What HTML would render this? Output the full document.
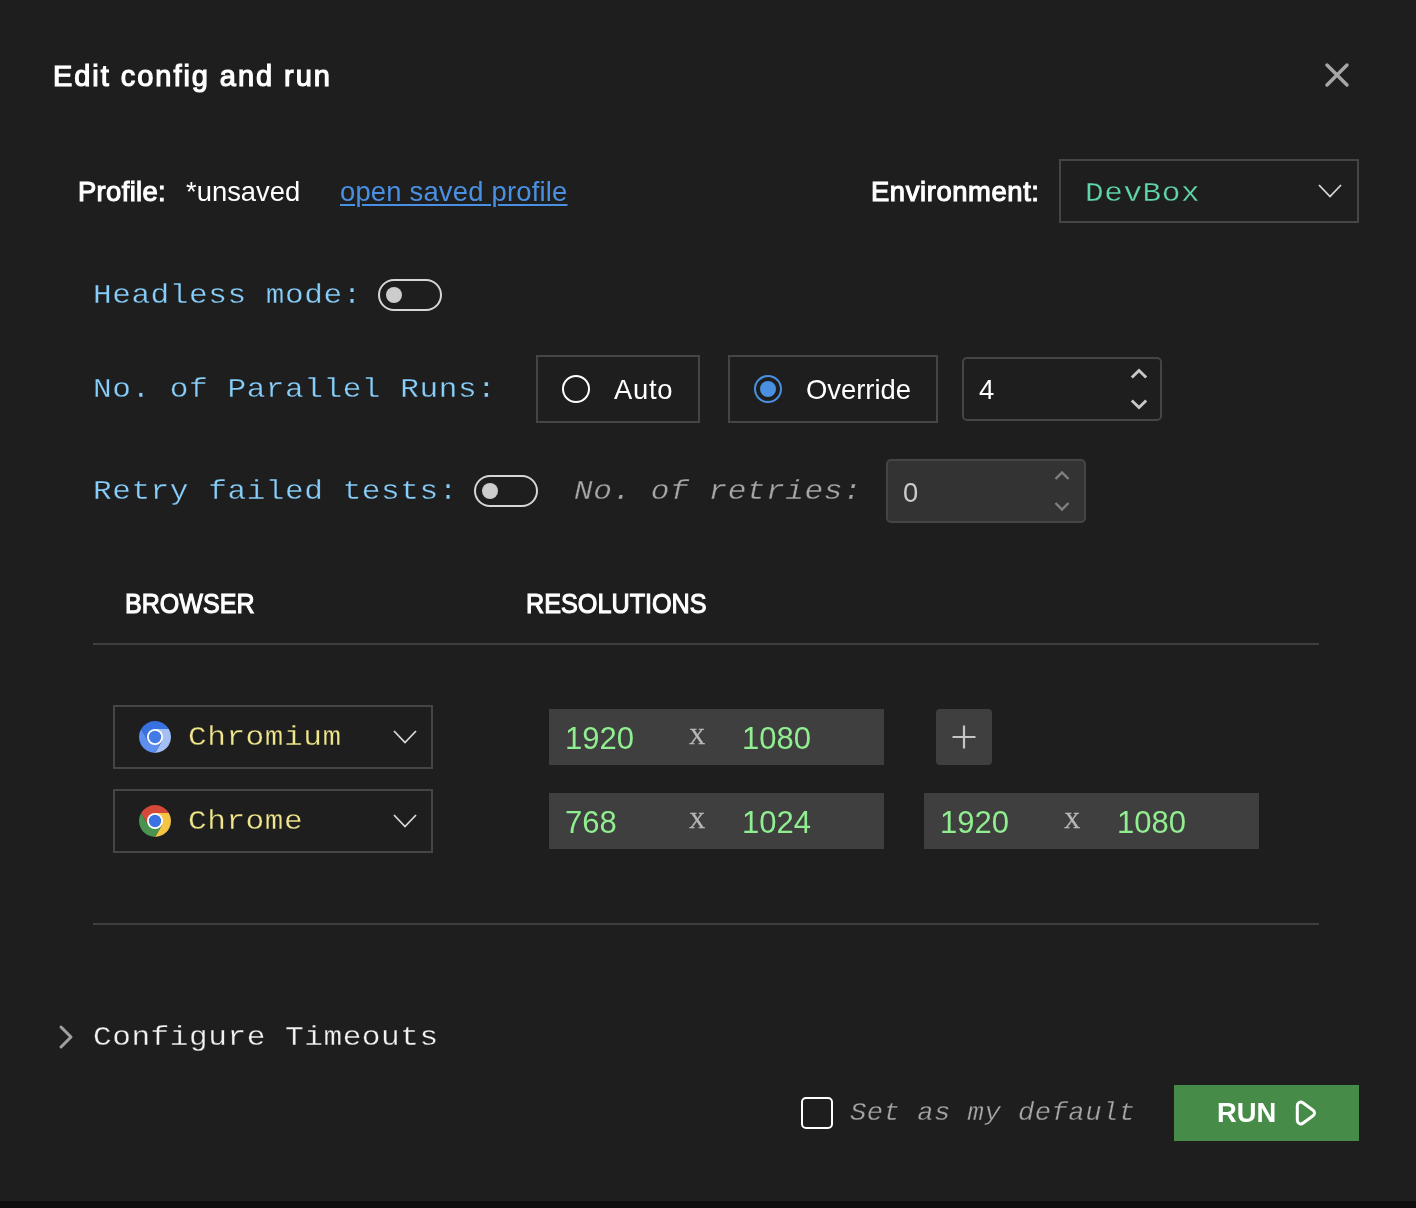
<!DOCTYPE html>
<html lang="en">
<head>
<meta charset="utf-8">
<title>Edit config and run</title>
<style>
*{box-sizing:border-box;margin:0;padding:0}
html,body{width:1416px;height:1208px;overflow:hidden;background:#1e1e1e}
body{position:relative;font-family:"Liberation Sans",sans-serif;color:#fff}
.abs{position:absolute;white-space:nowrap}
.strip{left:0;top:1201px;width:1416px;height:7px;background:#0e0e0e}
.sans{font-family:"Liberation Sans",sans-serif}
.mono{font-family:"Liberation Mono",monospace;font-size:28.5px;letter-spacing:0.5px;line-height:40px;transform:scaleX(1.091);transform-origin:0 50%;-webkit-text-stroke:0.3px #1e1e1e}
.semi{-webkit-text-stroke:1.1px currentColor;transform-origin:0 50%}
.title{left:53px;top:56px;font-size:29px;letter-spacing:1.95px;-webkit-text-stroke:1.2px #fff;line-height:40px;color:#fff}
.body{font-size:27.4px;line-height:40px;color:#fff}
.link{color:#4a90e2;text-decoration:underline;text-decoration-thickness:2px;text-underline-offset:3px}
.label{color:#87cefa}
.box{border:2px solid #454545}
.toggle{width:64px;height:32px;border:2px solid #d6d6d6;border-radius:16px}
.toggle i{position:absolute;left:6px;top:6px;width:16px;height:16px;border-radius:50%;background:#ccc}
.radio{width:28px;height:28px;border-radius:50%;border:2px solid #fff}
.radio.on{border-color:#4a90e2}
.radio.on i{position:absolute;left:4px;top:4px;width:16px;height:16px;border-radius:50%;background:#4a90e2}
.num{border:2px solid #454545;border-radius:5px;width:200px;height:64px}
.num.dis{background:#333}
.hr{height:2px;background:#3f3f3f;left:93px;width:1226px}
.res{width:335px;height:56px;background:#3f3f3f}
.res span{position:absolute;top:10px;font-size:31px;line-height:40px;color:#90ee90;font-family:"Liberation Sans",sans-serif}
.res b{position:absolute;top:8px;font-weight:normal;font-family:"Liberation Serif",serif;font-size:22.5px;line-height:40px;color:#b8b8b8;-webkit-text-stroke:0.4px #b8b8b8}
.ital{font-style:italic;color:#a6a6a6}
svg{position:absolute;overflow:visible}
</style>
</head>
<body>
<div id="root" style="position:absolute;left:0;top:0;width:1416px;height:1208px;will-change:transform">

<!-- header -->
<div class="abs title">Edit config and run</div>
<svg style="left:1325px;top:63px" width="24" height="24" viewBox="0 0 24 24"><path d="M2 2 L22 22 M22 2 L2 22" stroke="#a6a6a6" stroke-width="3.5" stroke-linecap="round" fill="none"/></svg>

<!-- profile row -->
<div class="abs body semi" style="left:78px;top:172px;letter-spacing:0.35px">Profile:</div>
<div class="abs body" style="left:186px;top:172px">*unsaved</div>
<div class="abs body link" style="left:340px;top:172px;letter-spacing:0.2px">open saved profile</div>
<div class="abs body semi" style="left:871px;top:172px;letter-spacing:0.6px">Environment:</div>
<div class="abs box" style="left:1059px;top:159px;width:300px;height:64px"></div>
<div class="abs mono" style="left:1085px;top:174px;color:#60d6a8">DevBox</div>
<svg style="left:1318px;top:184px" width="24" height="14" viewBox="0 0 24 14"><path d="M1 1 L12 12.5 L23 1" stroke="#d8d8d8" stroke-width="1.8" fill="none"/></svg>

<!-- headless -->
<div class="abs mono label" style="left:93px;top:276px">Headless mode:</div>
<div class="abs toggle" style="left:378px;top:279px"><i></i></div>

<!-- parallel runs -->
<div class="abs mono label" style="left:93px;top:370px">No. of Parallel Runs:</div>
<div class="abs box" style="left:536px;top:355px;width:164px;height:68px"></div>
<div class="abs radio" style="left:562px;top:375px"></div>
<div class="abs body" style="left:614px;top:370px;letter-spacing:0.7px">Auto</div>
<div class="abs box" style="left:728px;top:355px;width:210px;height:68px"></div>
<div class="abs radio on" style="left:754px;top:375px"><i></i></div>
<div class="abs body" style="left:806px;top:370px">Override</div>
<div class="abs num" style="left:962px;top:357px"></div>
<div class="abs body" style="left:979px;top:370px">4</div>
<svg style="left:1131px;top:368px" width="16" height="42" viewBox="0 0 16 42"><path d="M0.8 9.6 L8 2.4 L15.2 9.6 M0.8 32.4 L8 39.6 L15.2 32.4" stroke="#c8c8c8" stroke-width="2.8" fill="none"/></svg>

<!-- retry -->
<div class="abs mono label" style="left:93px;top:472px">Retry failed tests:</div>
<div class="abs toggle" style="left:474px;top:475px"><i></i></div>
<div class="abs mono ital" style="left:574px;top:472px">No. of retries:</div>
<div class="abs num dis" style="left:886px;top:459px"></div>
<div class="abs body" style="left:903px;top:473px;color:#ccc">0</div>
<svg style="left:1054px;top:470px" width="16" height="42" viewBox="0 0 16 42"><path d="M1.5 9 L8 2.5 L14.5 9 M1.5 33 L8 39.5 L14.5 33" stroke="#808080" stroke-width="2.4" fill="none"/></svg>

<!-- table head -->
<div class="abs body semi" style="left:125px;top:584px;transform:scaleX(0.915)">BROWSER</div>
<div class="abs body semi" style="left:526px;top:584px;transform:scaleX(0.92)">RESOLUTIONS</div>
<div class="abs hr" style="top:643px"></div>

<!-- row 1 -->
<div class="abs box" style="left:113px;top:705px;width:320px;height:64px"></div>
<svg style="left:139px;top:721px" width="32" height="32" viewBox="-16 -16 32 32">
  <path d="M-13.856 -8 A16 16 0 0 1 13.856 -8 L0 -8 L0 0 L-6.928 4 Z" fill="#3871e0"/>
  <path d="M13.856 -8 A16 16 0 0 1 0 16 L6.928 4 L0 0 L0 -8 Z" fill="#a3bff5"/>
  <path d="M0 16 A16 16 0 0 1 -13.856 -8 L-6.928 4 L0 0 L6.928 4 Z" fill="#5e8ff0"/>
  <circle r="8" fill="#fff"/><circle r="6.2" fill="#437ae6"/>
</svg>
<div class="abs mono" style="left:188px;top:718px;color:#f0e68c">Chromium</div>
<svg style="left:393px;top:730px" width="24" height="14" viewBox="0 0 24 14"><path d="M1 1 L12 12.5 L23 1" stroke="#d8d8d8" stroke-width="1.8" fill="none"/></svg>
<div class="abs res" style="left:549px;top:709px"><span style="left:16px">1920</span><b style="left:140px">X</b><span style="left:193px">1080</span></div>
<div class="abs" style="left:936px;top:709px;width:56px;height:56px;background:#3f3f3f;border-radius:4px"></div>
<svg style="left:952px;top:725px" width="24" height="24" viewBox="0 0 24 24"><path d="M12 0.5 V23.5 M0.5 12 H23.5" stroke="#c5c5c5" stroke-width="2.2" fill="none"/></svg>

<!-- row 2 -->
<div class="abs box" style="left:113px;top:789px;width:320px;height:64px"></div>
<svg style="left:139px;top:805px" width="32" height="32" viewBox="-16 -16 32 32">
  <path d="M-13.856 -8 A16 16 0 0 1 13.856 -8 L0 -8 L0 0 L-6.928 4 Z" fill="#d4493a"/>
  <path d="M13.856 -8 A16 16 0 0 1 0 16 L6.928 4 L0 0 L0 -8 Z" fill="#f5c444"/>
  <path d="M0 16 A16 16 0 0 1 -13.856 -8 L-6.928 4 L0 0 L6.928 4 Z" fill="#4b944f"/>
  <circle r="8" fill="#fff"/><circle r="6.2" fill="#3a72e2"/>
</svg>
<div class="abs mono" style="left:188px;top:802px;color:#f0e68c">Chrome</div>
<svg style="left:393px;top:814px" width="24" height="14" viewBox="0 0 24 14"><path d="M1 1 L12 12.5 L23 1" stroke="#d8d8d8" stroke-width="1.8" fill="none"/></svg>
<div class="abs res" style="left:549px;top:793px"><span style="left:16px">768</span><b style="left:140px">X</b><span style="left:193px">1024</span></div>
<div class="abs res" style="left:924px;top:793px"><span style="left:16px">1920</span><b style="left:140px">X</b><span style="left:193px">1080</span></div>

<div class="abs hr" style="top:923px"></div>

<!-- footer -->
<svg style="left:59px;top:1025px" width="14" height="24" viewBox="0 0 14 24"><path d="M2 2 L12 12 L2 22" stroke="#a0a0a0" stroke-width="3" stroke-linecap="round" stroke-linejoin="round" fill="none"/></svg>
<div class="abs mono" style="left:93px;top:1018px;color:#f2f2f2">Configure Timeouts</div>

<div class="abs" style="left:801px;top:1097px;width:32px;height:32px;border:2px solid #fff;border-radius:5px"></div>
<div class="abs mono ital" style="left:850px;top:1093px;font-size:24.9px;letter-spacing:0.46px">Set as my default</div>
<div class="abs" style="left:1174px;top:1085px;width:185px;height:56px;background:#468c48"></div>
<div class="abs body" style="left:1217px;top:1093px;font-weight:bold">RUN</div>
<svg style="left:1296px;top:1101px" width="20" height="24" viewBox="0 0 20 24"><path d="M1.30 4.64 A3.50 3.50 0 0 1 6.85 1.80 L17.06 9.16 A3.50 3.50 0 0 1 17.06 14.84 L6.85 22.20 A3.50 3.50 0 0 1 1.30 19.36 Z" stroke="#fff" stroke-width="3" stroke-linejoin="round" fill="none"/></svg>

<div class="abs strip"></div>
</div>
</body>
</html>
